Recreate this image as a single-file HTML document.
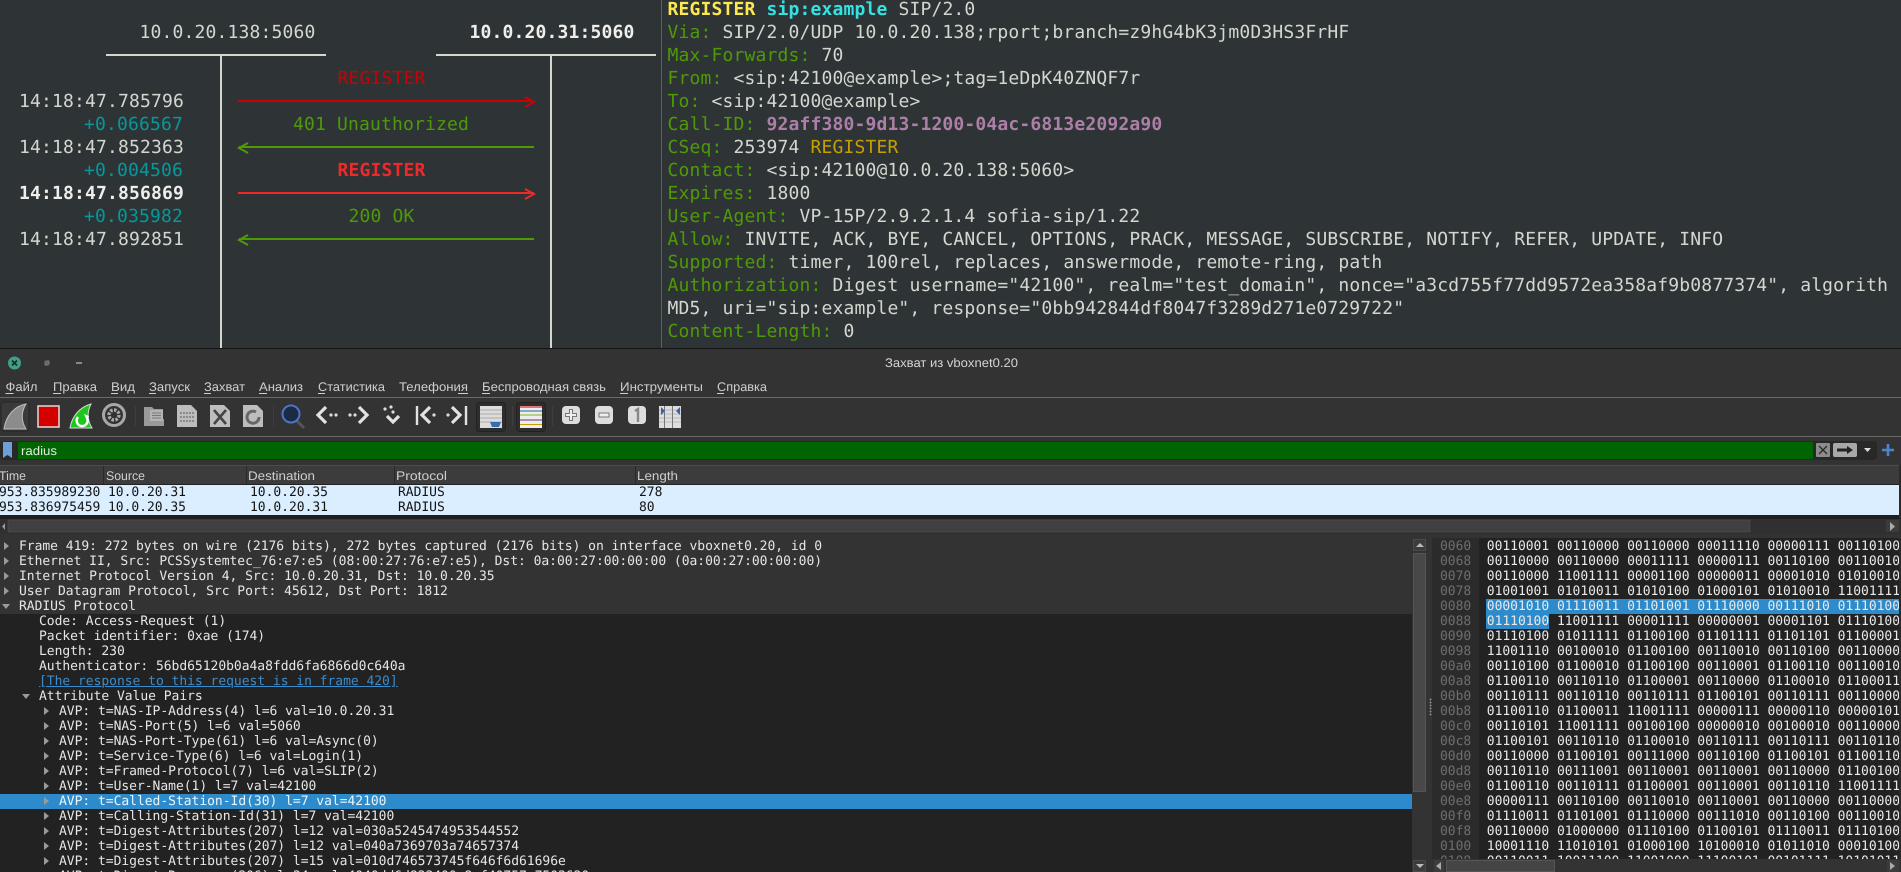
<!DOCTYPE html>
<html><head><meta charset="utf-8"><title>Захват из vboxnet0.20</title>
<style>
html,body{margin:0;padding:0;width:1901px;height:872px;overflow:hidden;background:#333;text-rendering:geometricPrecision}
div{position:absolute}
#term{left:0;top:0;width:1901px;height:348px;background:#2e3436;overflow:hidden;font:18px/23px "DejaVu Sans Mono",monospace;letter-spacing:.16px;color:#d3d7cf}
#term .l{white-space:pre;height:23px;transform:translateY(1px)}
b{font-weight:bold}
.g{color:#4e9a06}.te{color:#06989a}.re{color:#cc0000}.br{color:#ef2929}
.m{font:13px/15px "DejaVu Sans Mono",monospace;white-space:pre;letter-spacing:-.03px}
#tree div{height:15px;color:#e6e6e6;white-space:pre;font:13px/15px "DejaVu Sans Mono",monospace;letter-spacing:-.03px}
.tr{width:0;height:0;border-left:5px solid #9a9a9a;border-top:4px solid transparent;border-bottom:4px solid transparent}
.td{width:0;height:0;border-top:5px solid #9a9a9a;border-left:4px solid transparent;border-right:4px solid transparent}
#hex div{left:0;width:467px;height:15px;white-space:pre;font:13px/15px "DejaVu Sans Mono",monospace;color:#eaeaea;letter-spacing:-.03px}
#hex span{color:#6e6e6e}
svg text{font-family:"Liberation Sans",sans-serif}
</style></head><body>

<div id="term">
<div style="left:106px;top:54px;width:220px;height:2px;background:#d3d7cf"></div>
<div style="left:436px;top:54px;width:220px;height:2px;background:#d3d7cf"></div>
<div style="left:220px;top:55px;width:2px;height:293px;background:#d3d7cf"></div>
<div style="left:550px;top:55px;width:2px;height:293px;background:#d3d7cf"></div>
<div style="left:661px;top:0;width:1px;height:348px;background:#3465a4"></div>

<div class="l" style="left:139.5px;top:20px">10.0.20.138:5060</div>
<div class="l" style="left:469.5px;top:20px;color:#eeeeec"><b>10.0.20.31:5060</b></div>
<div class="l re" style="left:337.5px;top:66px">REGISTER</div>
<div class="l" style="left:19px;top:89px">14:18:47.785796</div>
<div class="l te" style="left:84px;top:112px">+0.066567</div>
<div class="l g" style="left:293px;top:112px">401 Unauthorized</div>
<div class="l" style="left:19px;top:135px">14:18:47.852363</div>
<div class="l te" style="left:84px;top:158px">+0.004506</div>
<div class="l br" style="left:337.5px;top:158px"><b>REGISTER</b></div>
<div class="l" style="left:19px;top:181px;color:#eeeeec"><b>14:18:47.856869</b></div>
<div class="l te" style="left:84px;top:204px">+0.035982</div>
<div class="l g" style="left:348.5px;top:204px">200 OK</div>
<div class="l" style="left:19px;top:227px">14:18:47.892851</div>

<svg style="position:absolute;left:0;top:0" width="660" height="348" fill="none" stroke-width="2">
<path d="M238 101H534M525 97L534 102L525 107" stroke="#cc0000"/>
<path d="M534 147H239M248 143L239 148L248 153" stroke="#4e9a06"/>
<path d="M238 193H534M525 189L534 194L525 199" stroke="#ef2929"/>
<path d="M534 239H239M248 235L239 240L248 245" stroke="#4e9a06"/>
</svg>

<div class="l" style="left:667.5px;top:-3px"><b style="color:#fce94f">REGISTER</b> <b style="color:#34e2e2">sip:example</b> SIP/2.0</div>
<div class="l" style="left:667.5px;top:20px"><span class="g">Via:</span> SIP/2.0/UDP 10.0.20.138;rport;branch=z9hG4bK3jm0D3HS3FrHF</div>
<div class="l" style="left:667.5px;top:43px"><span class="g">Max-Forwards:</span> 70</div>
<div class="l" style="left:667.5px;top:66px"><span class="g">From:</span> &lt;sip:42100@example&gt;;tag=1eDpK40ZNQF7r</div>
<div class="l" style="left:667.5px;top:89px"><span class="g">To:</span> &lt;sip:42100@example&gt;</div>
<div class="l" style="left:667.5px;top:112px"><span class="g">Call-ID:</span> <b style="color:#ad7fa8">92aff380-9d13-1200-04ac-6813e2092a90</b></div>
<div class="l" style="left:667.5px;top:135px"><span class="g">CSeq:</span> 253974 <span style="color:#c4a000">REGISTER</span></div>
<div class="l" style="left:667.5px;top:158px"><span class="g">Contact:</span> &lt;sip:42100@10.0.20.138:5060&gt;</div>
<div class="l" style="left:667.5px;top:181px"><span class="g">Expires:</span> 1800</div>
<div class="l" style="left:667.5px;top:204px"><span class="g">User-Agent:</span> VP-15P/2.9.2.1.4 sofia-sip/1.22</div>
<div class="l" style="left:667.5px;top:227px"><span class="g">Allow:</span> INVITE, ACK, BYE, CANCEL, OPTIONS, PRACK, MESSAGE, SUBSCRIBE, NOTIFY, REFER, UPDATE, INFO</div>
<div class="l" style="left:667.5px;top:250px"><span class="g">Supported:</span> timer, 100rel, replaces, answermode, remote-ring, path</div>
<div class="l" style="left:667.5px;top:273px"><span class="g">Authorization:</span> Digest username="42100", realm="test_domain", nonce="a3cd755f77dd9572ea358af9b0877374", algorith</div>
<div class="l" style="left:667.5px;top:296px">MD5, uri="sip:example", response="0bb942844df8047f3289d271e0729722"</div>
<div class="l" style="left:667.5px;top:319px"><span class="g">Content-Length:</span> 0</div>
</div>
<div style="left:0;top:348px;width:1901px;height:1px;background:#151515"></div>

<!-- Chrome / toolbars -->
<svg style="position:absolute;left:0;top:349px" width="1901" height="185" viewBox="0 349 1901 185">
<rect x="0" y="349" width="1901" height="185" fill="#333"/>
<circle cx="14.5" cy="363" r="6.5" fill="#3f9f87"/>
<path d="M12 360.5L17 365.5M17 360.5L12 365.5" stroke="#1e2b28" stroke-width="1.6"/>
<path d="M45 365v-3l3 3zM49 361v3l-3-3z" fill="#777" stroke="#777"/>
<rect x="76" y="362" width="6" height="2" fill="#888"/>
<text x="885" y="367" fill="#d4d4d4" font-size="12.5" textLength="133" lengthAdjust="spacingAndGlyphs">Захват из vboxnet0.20</text>

<g fill="#cfcfcf" font-size="12.5">
<text x="5.5" y="391" textLength="32" lengthAdjust="spacingAndGlyphs">Файл</text>
<text x="53" y="391" textLength="44" lengthAdjust="spacingAndGlyphs">Правка</text>
<text x="111" y="391" textLength="24" lengthAdjust="spacingAndGlyphs">Вид</text>
<text x="149" y="391" textLength="41" lengthAdjust="spacingAndGlyphs">Запуск</text>
<text x="204" y="391" textLength="41" lengthAdjust="spacingAndGlyphs">Захват</text>
<text x="259" y="391" textLength="44" lengthAdjust="spacingAndGlyphs">Анализ</text>
<text x="318" y="391" textLength="67" lengthAdjust="spacingAndGlyphs">Статистика</text>
<text x="399" y="391" textLength="69" lengthAdjust="spacingAndGlyphs">Телефония</text>
<text x="482" y="391" textLength="124" lengthAdjust="spacingAndGlyphs">Беспроводная связь</text>
<text x="620" y="391" textLength="83" lengthAdjust="spacingAndGlyphs">Инструменты</text>
<text x="717" y="391" textLength="50" lengthAdjust="spacingAndGlyphs">Справка</text>
</g>
<g fill="#cfcfcf">
<rect x="5.5" y="393" width="8" height="1"/><rect x="53" y="393" width="8" height="1"/><rect x="111" y="393" width="7" height="1"/><rect x="149" y="393" width="7" height="1"/><rect x="204" y="393" width="7" height="1"/><rect x="259" y="393" width="8" height="1"/><rect x="318" y="393" width="7" height="1"/><rect x="458" y="393" width="10" height="1"/><rect x="482" y="393" width="8" height="1"/><rect x="620" y="393" width="8" height="1"/><rect x="717" y="393" width="7" height="1"/>
</g>
<rect x="0" y="397" width="1901" height="1" fill="#6b6b6b"/>
<rect x="0" y="436" width="1901" height="1" fill="#6b6b6b"/>

<!-- toolbar icons -->
<rect x="1" y="402" width="28" height="29" rx="3" fill="#3a3a3a" stroke="#262626"/>
<path d="M26 404C15 406 6 415 4 429L26 429C21 421 21 412 26 404Z" fill="#8c8c8c" stroke="#bdbdbd"/>
<rect x="38" y="406" width="21" height="21" fill="#d40000" stroke="#ddd" stroke-width="1.5"/>
<path d="M91 404C80 407 72 416 70 428L92 428C87 420 87 412 91 404Z" fill="#1ec71e" stroke="#d8d8d8"/>
<path d="M78 417a5.5 5.5 0 1 0 9 1" fill="none" stroke="#fff" stroke-width="2.4"/><path d="M84 414l5 2-2 5z" fill="#fff"/>
<circle cx="114" cy="415" r="10.5" fill="none" stroke="#a8a8a8" stroke-width="3"/>
<circle cx="114" cy="415" r="5" fill="none" stroke="#a8a8a8" stroke-width="3.4" stroke-dasharray="2.5 1.4"/>
<rect x="135" y="406" width="1" height="20" fill="#3e3e3e"/>
<path d="M144 407h8l2 2h9v10l1 0v7h-20z" fill="#9a9a9a"/><rect x="150" y="410" width="13" height="11" fill="#b4b4b4"/><path d="M152 413h9M152 415.5h9M152 418h9" stroke="#777" stroke-width="1"/>
<path d="M177 405h14l6 6v16h-20z" fill="#bdbdbd"/><path d="M180 413h14M180 417h14M180 421h14" stroke="#8a8a8a" stroke-width="2" stroke-dasharray="2 1"/>
<path d="M210 405h14l6 6v16h-20z" fill="#bdbdbd"/><path d="M214 410L226 424M226 410L214 424" stroke="#444" stroke-width="2.6"/>
<path d="M243 405h14l6 6v16h-20z" fill="#bdbdbd"/><path d="M256 412a6 6 0 1 0 3 5" fill="none" stroke="#666" stroke-width="3"/>
<rect x="273" y="406" width="1" height="20" fill="#3e3e3e"/>
<path d="M297 421L304 428" stroke="#555" stroke-width="3"/>
<circle cx="291" cy="414" r="8.5" fill="#1c2a44" stroke="#4a76c8" stroke-width="2"/>
<g fill="none" stroke="#e2e2e2" stroke-width="3.2">
<path d="M326 407L318 415L326 423"/>
<path d="M359 407L367 415L359 423"/>
<path d="M387 416L393 422L399 416"/>
<path d="M417 406V425" stroke-width="2.4"/><path d="M430 407L422 415L430 423"/>
<path d="M452 407L460 415L452 423"/><path d="M466 406V425" stroke-width="2.4"/>
</g>
<g fill="#dcdcdc"><circle cx="331" cy="415" r="1.6"/><circle cx="336" cy="415" r="1.6"/><circle cx="350" cy="415" r="1.6"/><circle cx="355" cy="415" r="1.6"/><circle cx="385" cy="409" r="1.6"/><circle cx="391" cy="407" r="1.6"/><circle cx="393" cy="412" r="1.6"/><circle cx="434" cy="415" r="1.6"/><circle cx="448" cy="415" r="1.6"/></g>
<rect x="476.500" y="402.500" width="29" height="29" rx="3" fill="#2d2d2d" stroke="#222"/>
<rect x="480" y="406" width="22" height="22" fill="#dcdcdc"/>
<path d="M480 410h22M480 414h22M480 418h22M480 422h22" stroke="#aaa" stroke-width="1"/>
<path d="M490 422h11l-2 5h-7z" fill="#3a6cb0"/>
<rect x="512" y="406" width="1" height="20" fill="#3e3e3e"/>
<rect x="516.500" y="402.500" width="29" height="29" rx="3" fill="#2d2d2d" stroke="#222"/>
<rect x="520" y="406" width="22" height="22" fill="#ededed"/>
<path d="M520 407h22" stroke="#cc0000" stroke-width="1.1"/><path d="M520 411h22" stroke="#2a5db0" stroke-width="1.1"/><path d="M520 415h22" stroke="#7cb518" stroke-width="1.1"/><path d="M520 420h22" stroke="#5c3566" stroke-width="1.1"/><path d="M520 424.500h22" stroke="#c4a000" stroke-width="1.1"/>
<rect x="552" y="406" width="1" height="20" fill="#3e3e3e"/>
<rect x="562" y="406" width="18" height="18" rx="4" fill="#ddd"/><path d="M571 409v12M565 415h12" stroke="#777" stroke-width="4"/><path d="M571 410v10M566 415h10" stroke="#eee" stroke-width="2"/>
<rect x="595" y="406" width="18" height="18" rx="4" fill="#ddd"/><rect x="599" y="413" width="10" height="4" fill="#eee" stroke="#777"/>
<rect x="628" y="406" width="18" height="18" rx="4" fill="#ddd"/><path d="M635 411l3-2v13" fill="none" stroke="#888" stroke-width="2.4"/>
<rect x="659" y="406" width="22" height="22" fill="#ddd"/><path d="M659 410h22M659 414h22M659 418h22M659 422h22" stroke="#bbb"/><path d="M664.500 406v22M672.500 406v22" stroke="#777"/><path d="M661 407l4 4-4 4zM680 407l-4 4 4 4z" fill="#2f66b0"/>

<!-- filter -->
<rect x="0" y="441" width="1877" height="19" rx="4" fill="#282828"/>
<rect x="18" y="442" width="1795" height="17" fill="#006400"/>
<path d="M3 442h9v16l-4.500-3l-4.500 3z" fill="#6f9fd8"/>
<text x="21" y="455" fill="#dfeedf" font-size="12.5" textLength="36" lengthAdjust="spacingAndGlyphs">radius</text>
<rect x="1816" y="443" width="14" height="14" rx="1" fill="#8c8c8c"/><path d="M1819 446L1827 454M1827 446L1819 454" stroke="#2a2a2a" stroke-width="1.3"/>
<rect x="1833" y="443" width="24" height="14" rx="2" fill="#a8a8a8"/><path d="M1837 448.500h10v-2.500l6 4-6 4v-2.500h-10z" fill="#222"/>
<path d="M1864 448h7l-3.500 4z" fill="#ddd"/>
<path d="M1888 444v12M1882 450h12" stroke="#4a86d0" stroke-width="2.6"/>

<!-- packet list header -->
<rect x="0" y="466" width="1899" height="18" fill="#3c3c3c"/>
<rect x="0" y="465" width="1899" height="1" fill="#4c4c4c"/>
<rect x="0" y="484" width="1899" height="1" fill="#222"/>
<g fill="#2a2a2a"><rect x="103" y="466" width="1" height="18"/><rect x="246" y="466" width="1" height="18"/><rect x="394" y="466" width="1" height="18"/><rect x="635" y="466" width="1" height="18"/></g>
<g fill="#cfcfcf" font-size="12.5">
<text x="-1" y="480" textLength="27" lengthAdjust="spacingAndGlyphs">Time</text>
<text x="106" y="480" textLength="39" lengthAdjust="spacingAndGlyphs">Source</text>
<text x="248" y="480" textLength="67" lengthAdjust="spacingAndGlyphs">Destination</text>
<text x="396" y="480" textLength="51" lengthAdjust="spacingAndGlyphs">Protocol</text>
<text x="637" y="480" textLength="41" lengthAdjust="spacingAndGlyphs">Length</text>
</g>
<rect x="0" y="485" width="1899" height="30" fill="#daeeff"/>
<rect x="0" y="515" width="1899" height="4" fill="#1f1f1f"/>
<rect x="1899" y="465" width="2" height="54" fill="#2a2a2a"/>
<!-- hscroll -->
<rect x="0" y="519" width="1901" height="15" fill="#303030"/>
<rect x="8" y="520" width="1742" height="12" fill="#404040" stroke="#555" stroke-width=".5"/>
<path d="M5 523v7l-3-3.500z" fill="#999"/>
<rect x="1886" y="520" width="13" height="12" fill="#3c3c3c"/>
<path d="M1890 522v9l5-4.500z" fill="#aaa"/>
<g fill="#8a8a8a"><rect x="938" y="535" width="1" height="1"/><rect x="941" y="535" width="1" height="1"/><rect x="944" y="535" width="1" height="1"/><rect x="947" y="535" width="1" height="1"/><rect x="950" y="535" width="1" height="1"/><rect x="953" y="535" width="1" height="1"/></g>
</svg>

<div class="m" style="left:-1px;top:485px;color:#141414">953.835989230</div>
<div class="m" style="left:108px;top:485px;color:#141414">10.0.20.31</div>
<div class="m" style="left:250px;top:485px;color:#141414">10.0.20.35</div>
<div class="m" style="left:398px;top:485px;color:#141414">RADIUS</div>
<div class="m" style="left:639px;top:485px;color:#141414">278</div>
<div class="m" style="left:-1px;top:500px;color:#141414">953.836975459</div>
<div class="m" style="left:108px;top:500px;color:#141414">10.0.20.35</div>
<div class="m" style="left:250px;top:500px;color:#141414">10.0.20.31</div>
<div class="m" style="left:398px;top:500px;color:#141414">RADIUS</div>
<div class="m" style="left:639px;top:500px;color:#141414">80</div>

<!-- detail tree -->
<div style="left:0;top:538px;width:1412px;height:334px;background:#222;overflow:hidden">
<div style="left:0;top:0;width:1412px;height:76px;background:#333"></div>
<div style="left:0;top:256px;width:1412px;height:15px;background:#2e8bcb"></div>
<div id="tree" style="left:0;top:0;width:1412px;height:334px">
<div class="tr" style="left:4px;top:4px;height:0"></div><div style="left:19px;top:1px">Frame 419: 272 bytes on wire (2176 bits), 272 bytes captured (2176 bits) on interface vboxnet0.20, id 0</div>
<div class="tr" style="left:4px;top:19px;height:0"></div><div style="left:19px;top:16px">Ethernet II, Src: PCSSystemtec_76:e7:e5 (08:00:27:76:e7:e5), Dst: 0a:00:27:00:00:00 (0a:00:27:00:00:00)</div>
<div class="tr" style="left:4px;top:34px;height:0"></div><div style="left:19px;top:31px">Internet Protocol Version 4, Src: 10.0.20.31, Dst: 10.0.20.35</div>
<div class="tr" style="left:4px;top:49px;height:0"></div><div style="left:19px;top:46px">User Datagram Protocol, Src Port: 45612, Dst Port: 1812</div>
<div class="td" style="left:2px;top:66px;height:0"></div><div style="left:19px;top:61px">RADIUS Protocol</div>
<div style="left:39px;top:76px">Code: Access-Request (1)</div>
<div style="left:39px;top:91px">Packet identifier: 0xae (174)</div>
<div style="left:39px;top:106px">Length: 230</div>
<div style="left:39px;top:121px">Authenticator: 56bd65120b0a4a8fdd6fa6866d0c640a</div>
<div style="left:39px;top:136px;color:#3a8ccc;text-decoration:underline">[The response to this request is in frame 420]</div>
<div class="td" style="left:22px;top:156px;height:0"></div><div style="left:39px;top:151px">Attribute Value Pairs</div>
<div class="tr" style="left:44px;top:169px;height:0"></div><div style="left:59px;top:166px">AVP: t=NAS-IP-Address(4) l=6 val=10.0.20.31</div>
<div class="tr" style="left:44px;top:184px;height:0"></div><div style="left:59px;top:181px">AVP: t=NAS-Port(5) l=6 val=5060</div>
<div class="tr" style="left:44px;top:199px;height:0"></div><div style="left:59px;top:196px">AVP: t=NAS-Port-Type(61) l=6 val=Async(0)</div>
<div class="tr" style="left:44px;top:214px;height:0"></div><div style="left:59px;top:211px">AVP: t=Service-Type(6) l=6 val=Login(1)</div>
<div class="tr" style="left:44px;top:229px;height:0"></div><div style="left:59px;top:226px">AVP: t=Framed-Protocol(7) l=6 val=SLIP(2)</div>
<div class="tr" style="left:44px;top:244px;height:0"></div><div style="left:59px;top:241px">AVP: t=User-Name(1) l=7 val=42100</div>
<div class="tr" style="left:44px;top:259px;height:0"></div><div style="left:59px;top:256px;color:#eaf4fb">AVP: t=Called-Station-Id(30) l=7 val=42100</div>
<div class="tr" style="left:44px;top:274px;height:0"></div><div style="left:59px;top:271px">AVP: t=Calling-Station-Id(31) l=7 val=42100</div>
<div class="tr" style="left:44px;top:289px;height:0"></div><div style="left:59px;top:286px">AVP: t=Digest-Attributes(207) l=12 val=030a5245474953544552</div>
<div class="tr" style="left:44px;top:304px;height:0"></div><div style="left:59px;top:301px">AVP: t=Digest-Attributes(207) l=12 val=040a7369703a74657374</div>
<div class="tr" style="left:44px;top:319px;height:0"></div><div style="left:59px;top:316px">AVP: t=Digest-Attributes(207) l=15 val=010d746573745f646f6d61696e</div>
<div style="left:59px;top:331px">AVP: t=Digest-Response(206) l=34 val=4040dd6d833400c8ef40757e7503620</div>
</div>
</div>

<!-- detail scrollbar -->
<div style="left:1412px;top:538px;width:20px;height:334px;background:#333"></div>
<div style="left:1413px;top:539px;width:13px;height:12px;background:#3c3c3c;border:1px solid #4a4a4a;box-sizing:border-box"></div>
<div style="left:1416px;top:543px;width:0;height:0;border-bottom:4px solid #bbb;border-left:4px solid transparent;border-right:4px solid transparent"></div>
<div style="left:1413px;top:553px;width:13px;height:239px;background:#484848;border:1px solid #555;box-sizing:border-box"></div>
<div style="left:1413px;top:860px;width:13px;height:12px;background:#3c3c3c;border:1px solid #4a4a4a;box-sizing:border-box"></div>
<div style="left:1416px;top:864px;width:0;height:0;border-top:4px solid #bbb;border-left:4px solid transparent;border-right:4px solid transparent"></div>
<div style="left:1429px;top:698px;width:3px;height:18px;background-image:radial-gradient(#888 40%,transparent 45%);background-size:3px 3px"></div>

<!-- hex pane -->
<div style="left:1432px;top:538px;width:467px;height:321px;background:#222;overflow:hidden">
<div style="left:0;top:0;width:47px;height:321px;background:#2b2b2b"></div>
<div style="left:54px;top:61px;width:413px;height:15px;background:#2e8bcb"></div>
<div style="left:54px;top:76px;width:63px;height:15px;background:#2e8bcb"></div>
<div id="hex" style="left:0;top:1px;width:467px;height:321px">
<div style="top:0;left:8px"><span>0060</span>  00110001 00110000 00110000 00011110 00000111 00110100</div>
<div style="top:15px;left:8px"><span>0068</span>  00110000 00110000 00011111 00000111 00110100 00110010</div>
<div style="top:30px;left:8px"><span>0070</span>  00110000 11001111 00001100 00000011 00001010 01010010</div>
<div style="top:45px;left:8px"><span>0078</span>  01001001 01010011 01010100 01000101 01010010 11001111</div>
<div style="top:60px;left:8px"><span>0080</span>  00001010 01110011 01101001 01110000 00111010 01110100</div>
<div style="top:75px;left:8px"><span>0088</span>  01110100 11001111 00001111 00000001 00001101 01110100</div>
<div style="top:90px;left:8px"><span>0090</span>  01110100 01011111 01100100 01101111 01101101 01100001</div>
<div style="top:105px;left:8px"><span>0098</span>  11001110 00100010 01100100 00110010 00110100 00110000</div>
<div style="top:120px;left:8px"><span>00a0</span>  00110100 01100010 01100100 00110001 01100110 00110010</div>
<div style="top:135px;left:8px"><span>00a8</span>  01100110 00110110 01100001 00110000 01100010 01100011</div>
<div style="top:150px;left:8px"><span>00b0</span>  00110111 00110110 00110111 01100101 00110111 00110000</div>
<div style="top:165px;left:8px"><span>00b8</span>  01100110 01100011 11001111 00000111 00000110 00000101</div>
<div style="top:180px;left:8px"><span>00c0</span>  00110101 11001111 00100100 00000010 00100010 00110000</div>
<div style="top:195px;left:8px"><span>00c8</span>  01100101 00110110 01100010 00110111 00110111 00110110</div>
<div style="top:210px;left:8px"><span>00d0</span>  00110000 01100101 00111000 00110100 01100101 01100110</div>
<div style="top:225px;left:8px"><span>00d8</span>  00110110 00111001 00110001 00110001 00110000 01100100</div>
<div style="top:240px;left:8px"><span>00e0</span>  01100110 00110111 01100001 00110001 00110110 11001111</div>
<div style="top:255px;left:8px"><span>00e8</span>  00000111 00110100 00110010 00110001 00110000 00110000</div>
<div style="top:270px;left:8px"><span>00f0</span>  01110011 01101001 01110000 00111010 00110100 00110010</div>
<div style="top:285px;left:8px"><span>00f8</span>  00110000 01000000 01110100 01100101 01110011 01110100</div>
<div style="top:300px;left:8px"><span>0100</span>  10001110 11010101 01000100 10100010 01011010 00010100</div>
<div style="top:315px;left:8px"><span>0108</span>  00110011 10011100 11001000 11100101 00101111 10101011</div>
</div>
</div>
<div style="left:1899px;top:538px;width:2px;height:334px;background:#2a2a2a"></div>

<!-- hex hscroll -->
<div style="left:1432px;top:859px;width:469px;height:13px;background:#333"></div>
<div style="left:1434px;top:860px;width:10px;height:12px;background:#3c3c3c"></div>
<div style="left:1436px;top:862px;width:0;height:0;border-right:5px solid #aaa;border-top:4px solid transparent;border-bottom:4px solid transparent"></div>
<div style="left:1446px;top:860px;width:109px;height:12px;background:#454545;border:1px solid #555;box-sizing:border-box"></div>
<div style="left:1887px;top:860px;width:12px;height:12px;background:#3c3c3c"></div>
<div style="left:1890px;top:862px;width:0;height:0;border-left:5px solid #aaa;border-top:4px solid transparent;border-bottom:4px solid transparent"></div>

</body></html>
